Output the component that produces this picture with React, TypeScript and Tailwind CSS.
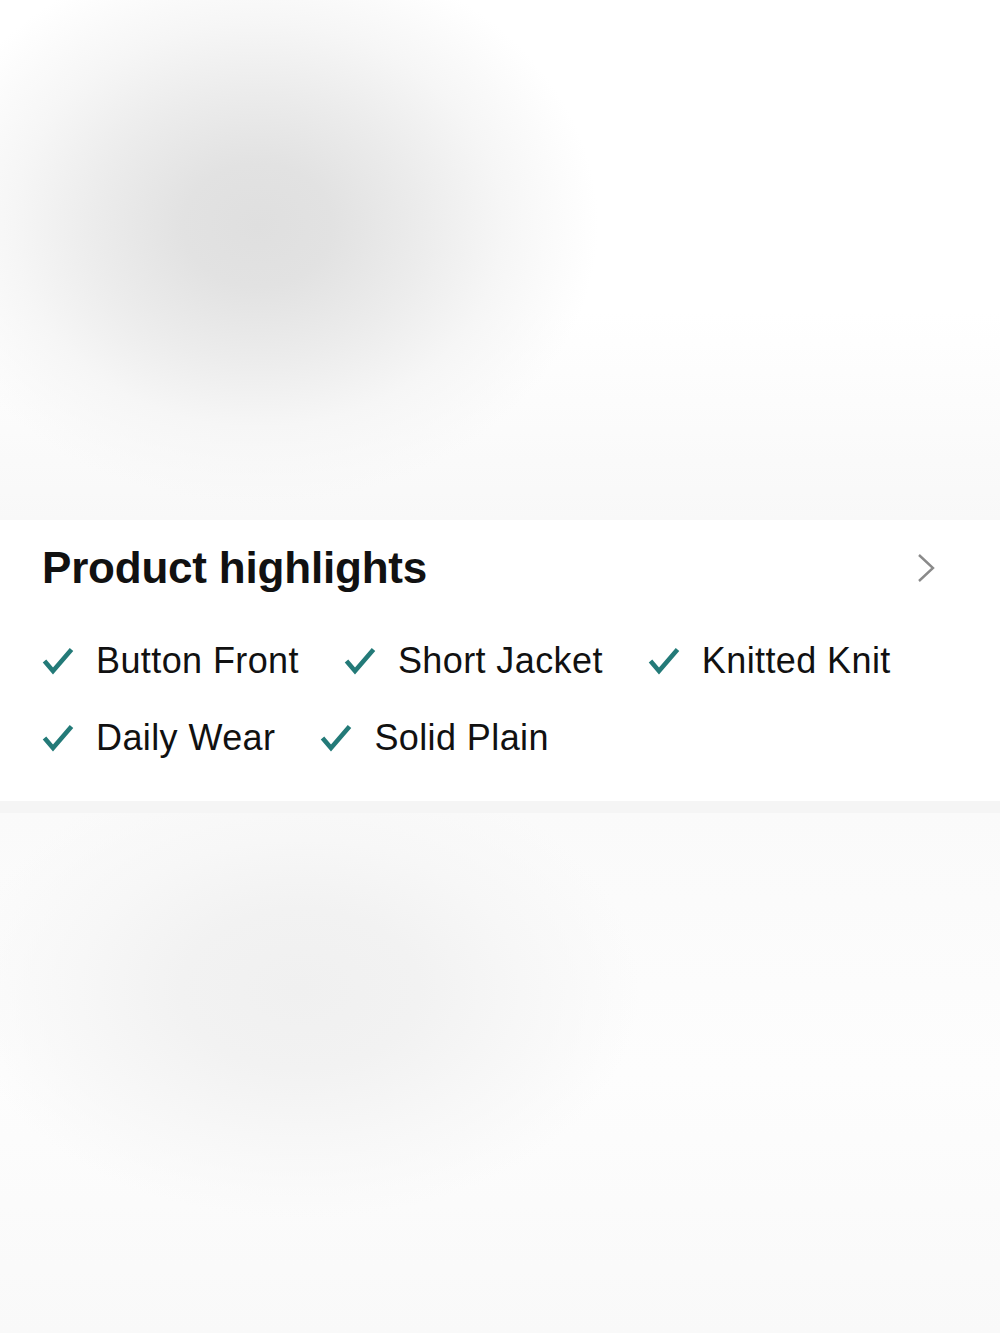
import React from "react";

const Check = () => (
  <svg width="32" height="28" viewBox="0 0 32 28" className="shrink-0" fill="none">
    <path d="M2.5 14 L11 24 L29.5 2.5" stroke="#237a78" strokeWidth="4.6" strokeLinecap="butt" strokeLinejoin="miter" />
  </svg>
);

const Item = ({ label }: { label: string }) => (
  <div className="flex items-center gap-[22px]">
    <Check />
    <span className="text-[36px] leading-[44px] text-[#111] tracking-[0.4px]">{label}</span>
  </div>
);

export default function App() {
  return (
    <div className="w-[1000px] h-[1333px] bg-white flex flex-col overflow-hidden" style={{ fontFamily: '"Liberation Sans", Arial, sans-serif' }}>
      <div className="h-[520px] w-full bg-[radial-gradient(ellipse_340px_280px_at_258px_225px,#dfdfdf_0%,#e2e2e2_22%,#ececec_48%,#f6f6f6_72%,rgba(252,252,252,0)_100%),linear-gradient(to_bottom,#ffffff_0%,#ffffff_60%,#f8f8f8_100%)]" />
      <div className="bg-white px-[42px] pt-[26px] pb-[41px] flex flex-col">
        <div className="flex items-center justify-between h-[44px]">
          <h2 className="text-[44px] font-bold text-[#111] leading-none tracking-[-0.2px]">Product highlights</h2>
          <svg width="22" height="32" viewBox="0 0 22 32" className="mr-[20px]" fill="none">
            <path d="M3 3 L17 16 L3 29" stroke="#8a8a8a" strokeWidth="2.4" />
          </svg>
        </div>
        <div className="mt-[49px] flex flex-wrap gap-x-[45px] gap-y-[33px]">
          <Item label="Button Front" />
          <Item label="Short Jacket" />
          <Item label="Knitted Knit" />
          <Item label="Daily Wear" />
          <Item label="Solid Plain" />
        </div>
      </div>
      <div className="h-[12px] bg-[#f5f5f5]" />
      <div className="flex-1 w-full bg-[radial-gradient(ellipse_340px_230px_at_300px_176px,#f0f0f0_0%,#f2f2f2_35%,#f7f7f7_65%,rgba(250,250,250,0)_100%),linear-gradient(to_bottom,#fafafa_0%,#fdfdfd_50%,#f9f9f9_100%)]" />
    </div>
  );
}
